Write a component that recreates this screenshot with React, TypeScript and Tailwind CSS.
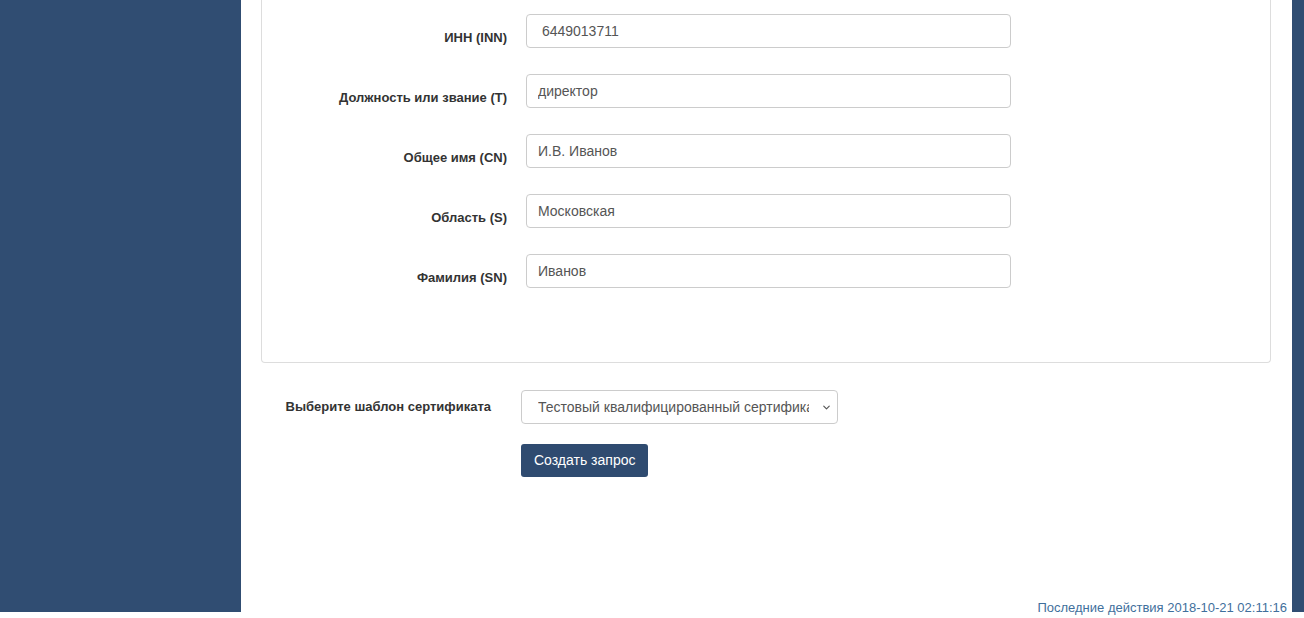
import { ChevronDown } from "lucide-react";

// Поля сертификата (часть карточки, верх обрезан)
const fields = [
  { id: "inn", label: "ИНН (INN)", value: " 6449013711" },
  { id: "title", label: "Должность или звание (T)", value: "директор" },
  { id: "cn", label: "Общее имя (CN)", value: "И.В. Иванов" },
  { id: "region", label: "Область (S)", value: "Московская" },
  { id: "surname", label: "Фамилия (SN)", value: "Иванов" },
];

export default function App() {
  return (
    <div className="flex h-[618px] items-start bg-white font-['Liberation_Sans',Arial,sans-serif]">
      {/* Левое меню */}
      <aside className="h-[612px] w-[241px] shrink-0 bg-[#304d72]" />

      {/* Основная часть */}
      <main className="flex h-[618px] flex-1 flex-col">
        <div className="mx-[20px] mr-[21px] rounded-b-[4px] border-x border-b border-[#dddddd] pb-[74px]">
          <div className="flex flex-col gap-[26px] pt-[14px]">
            {fields.map((f) => (
              <div key={f.id} className="flex items-start">
                <label
                  htmlFor={f.id}
                  className="w-[245px] shrink-0 pt-[15px] text-right text-[13px] font-bold leading-[18px] text-[#333333]"
                >
                  {f.label}
                </label>
                <input
                  id={f.id}
                  type="text"
                  defaultValue={f.value}
                  className="ml-[19px] h-[34px] w-[485px] rounded-[4px] border border-[#cccccc] px-[11px] text-[14px] text-[#555555] outline-none"
                />
              </div>
            ))}
          </div>
        </div>

        {/* Выбор шаблона */}
        <div className="mt-[27px] flex items-center">
          <label
            htmlFor="template"
            className="w-[250px] shrink-0 text-right text-[13px] font-bold leading-[18px] text-[#333333]"
          >
            Выберите шаблон сертификата
          </label>
          <div className="relative ml-[30px] w-[317px]">
            <select
              id="template"
              className="h-[34px] w-full appearance-none rounded-[4px] border border-[#cccccc] bg-white pl-[16px] pr-[28px] text-[14px] text-[#555555] outline-none"
            >
              <option>Тестовый квалифицированный сертификат</option>
            </select>
            <ChevronDown
              className="pointer-events-none absolute right-[6px] top-[12px] h-[11px] w-[11px] text-[#555555]"
              strokeWidth={2.5}
            />
          </div>
        </div>

        <div className="mt-[20px] pl-[280px]">
          <button
            type="button"
            className="h-[33px] rounded-[3px] bg-[#2f4b70] px-[13px] text-[14px] text-white"
          >
            Создать запрос
          </button>
        </div>

        <p className="mt-auto pb-[1px] pr-[5px] text-right text-[13px] leading-[18px] text-[#3f6f9c]">
          Последние действия 2018-10-21 02:11:16
        </p>
      </main>

      {/* Правая полоса */}
      <aside className="h-[612px] w-[12px] shrink-0 bg-[#304d72]" />
    </div>
  );
}
